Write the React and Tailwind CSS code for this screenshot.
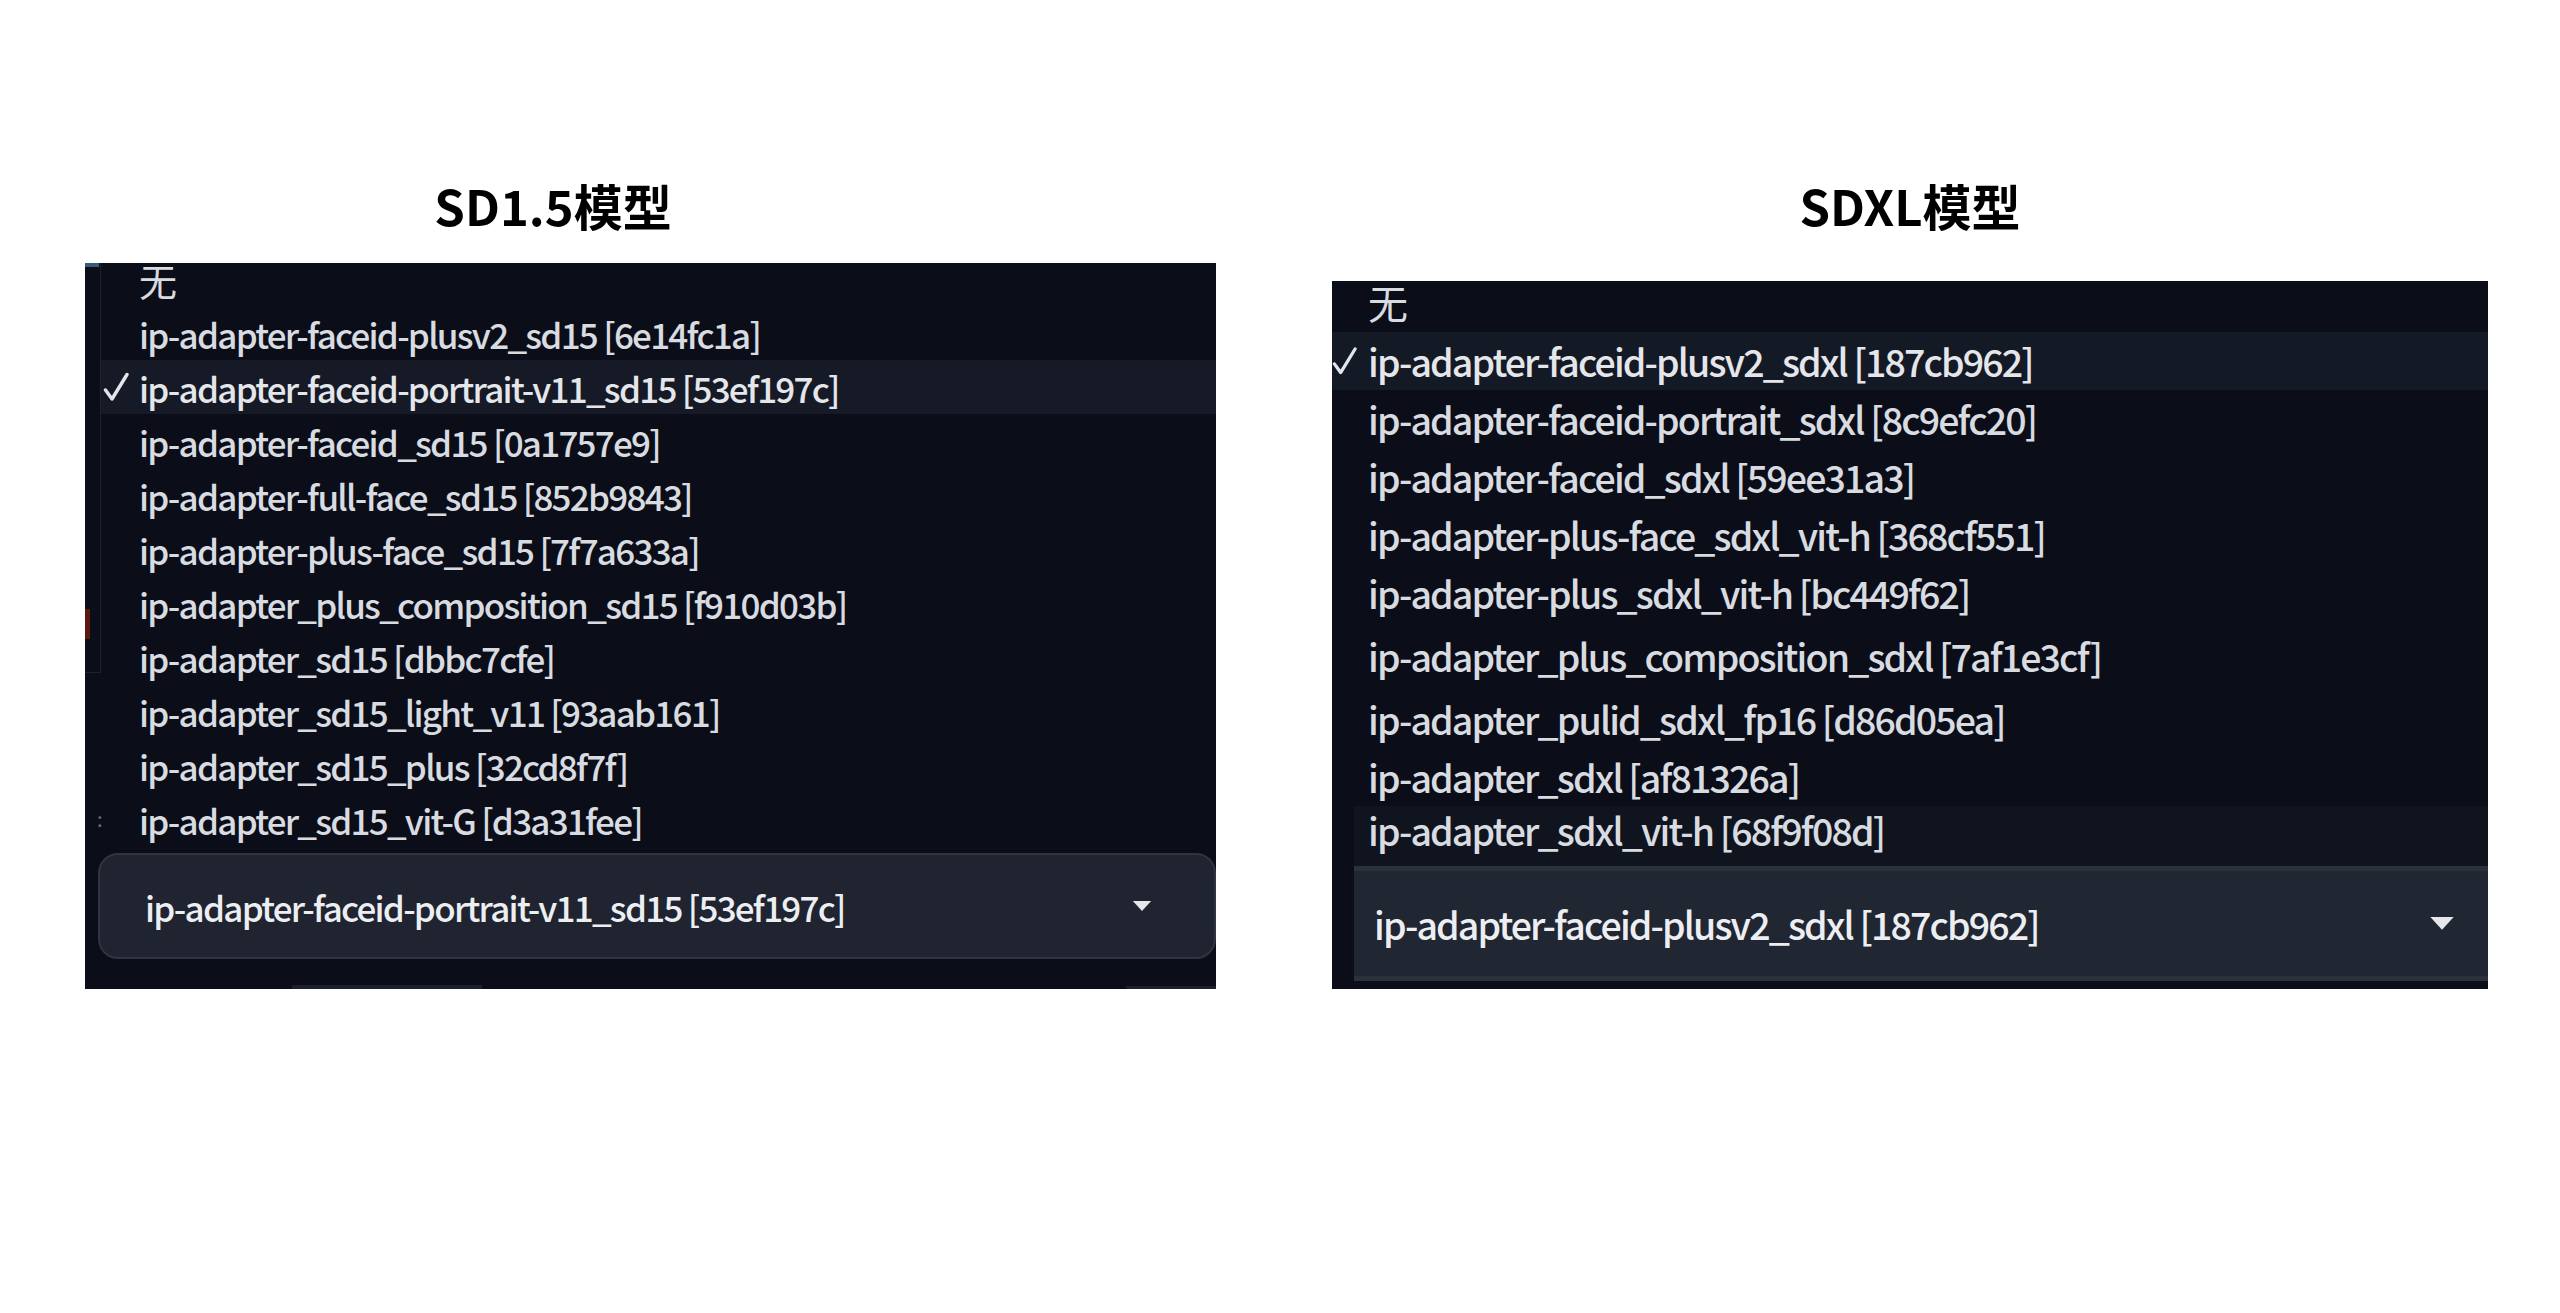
import React from "react";

const sd15Models = [
  "ip-adapter-faceid-plusv2_sd15 [6e14fc1a]",
  "ip-adapter-faceid-portrait-v11_sd15 [53ef197c]",
  "ip-adapter-faceid_sd15 [0a1757e9]",
  "ip-adapter-full-face_sd15 [852b9843]",
  "ip-adapter-plus-face_sd15 [7f7a633a]",
  "ip-adapter_plus_composition_sd15 [f910d03b]",
  "ip-adapter_sd15 [dbbc7cfe]",
  "ip-adapter_sd15_light_v11 [93aab161]",
  "ip-adapter_sd15_plus [32cd8f7f]",
  "ip-adapter_sd15_vit-G [d3a31fee]",
];

const sdxlModels = [
  "ip-adapter-faceid-plusv2_sdxl [187cb962]",
  "ip-adapter-faceid-portrait_sdxl [8c9efc20]",
  "ip-adapter-faceid_sdxl [59ee31a3]",
  "ip-adapter-plus-face_sdxl_vit-h [368cf551]",
  "ip-adapter-plus_sdxl_vit-h [bc449f62]",
  "ip-adapter_plus_composition_sdxl [7af1e3cf]",
  "ip-adapter_pulid_sdxl_fp16 [d86d05ea]",
  "ip-adapter_sdxl [af81326a]",
  "ip-adapter_sdxl_vit-h [68f9f08d]",
];

function Check({ className }) {
  return (
    <svg viewBox="0 0 26 30" className={className} fill="none">
      <path d="M2.5 18 L9 27 L24 2.5" stroke="#e2e5ea" strokeWidth="3.4" strokeLinecap="round" strokeLinejoin="round" />
    </svg>
  );
}

function Caret({ className }) {
  return (
    <svg viewBox="0 0 20 12" className={className}>
      <path d="M0 0 H20 L10 11 Z" fill="#e5e7eb" />
    </svg>
  );
}

function Sd15Panel() {
  return (
    <div className="relative w-[1131px] h-[726px] bg-[#0b0e18] flex flex-col">
      {/* edge of the panel underneath the open menu */}
      <div className="absolute left-0 top-0 w-[16px] h-[409px] border-r border-[#1c2130]" />
      <div className="absolute left-0 top-[409px] w-[16px] h-px bg-[#1c2130]" />
      <div className="absolute left-0 top-[346px] w-[5px] h-[30px] bg-[#5a1a10]" />
      <div className="absolute left-0 top-0 w-[14px] h-[4px] bg-[#3b5a7a]" />
      <span className="absolute left-[12px] top-[546px] text-[20px] leading-none text-[#6b7280]">:</span>

      <div className="h-[43px] pb-[10px] flex items-center pl-[54px] text-[38px] leading-none text-[#d8dbe0]">无</div>
      {sd15Models.map((m, i) => {
        const checked = i === 1;
        return (
          <div
            key={m}
            className={
              "h-[54px] ml-[16px] flex items-center text-[35px] font-medium tracking-[-0.05em] leading-none whitespace-nowrap " +
              (checked ? "bg-[#151a26] text-[#e4e6ea]" : "text-[#d8dbe0]")
            }
          >
            <span className="w-[38px] flex items-center">
              {checked && <Check className="w-[26px] h-[30px] ml-[2px]" />}
            </span>
            <span>{m}</span>
          </div>
        );
      })}
      <div className="mt-[7px] ml-[13px] h-[106px] rounded-[20px] border-2 bg-[#1f2430] border-[#2f3441] flex items-center justify-between pl-[45px] pr-[62px]">
        <span className="text-[35px] font-medium tracking-[-0.05em] leading-none text-[#eceef1] whitespace-nowrap">
          ip-adapter-faceid-portrait-v11_sd15 [53ef197c]
        </span>
        <Caret className="w-[20px] h-[11px]" />
      </div>
      <div className="flex-1 relative">
        <div className="absolute bottom-0 left-[207px] w-[190px] h-[4px] bg-[#1b202b]" />
        <div className="absolute bottom-0 right-0 w-[90px] h-[3px] bg-[#1b202b]" />
      </div>
    </div>
  );
}

function SdxlPanel() {
  return (
    <div className="w-[1156px] h-[708px] bg-[#0b0e18] flex flex-col">
      <div className="h-[51px] pb-[10px] flex items-center pl-[36px] text-[40px] leading-none text-[#d8dbe0]">无</div>
      {sdxlModels.map((m, i) => {
        const checked = i === 0;
        const last = i === sdxlModels.length - 1;
        const height = i === 5 ? "h-[68px]" : last ? "h-[60px] pb-[12px]" : "h-[58px]";
        return (
          <div
            key={m}
            className={
              height +
              " flex items-center text-[37.5px] font-medium tracking-[-0.05em] leading-none whitespace-nowrap " +
              (checked ? "bg-[#141926] text-[#e4e6ea] " : "text-[#d8dbe0] ") +
              (last ? "ml-[22px] bg-[#10141f]" : "")
            }
          >
            <span className={last ? "w-[14px]" : "w-[36px] flex items-center"}>
              {checked && <Check className="w-[25px] h-[30px]" />}
            </span>
            <span>{m}</span>
          </div>
        );
      })}
      <div className="ml-[22px] h-[115px] border-y-[5px] border-[#2b303b] bg-[#212633] flex items-center justify-between pl-[20px] pr-[34px]">
        <span className="text-[37.5px] font-medium tracking-[-0.05em] leading-none text-[#eceef1] whitespace-nowrap">
          ip-adapter-faceid-plusv2_sdxl [187cb962]
        </span>
        <Caret className="w-[24px] h-[14px]" />
      </div>
      <div className="flex-1" />
    </div>
  );
}

export default function App() {
  return (
    <div
      className="w-[2560px] h-[1313px] bg-white flex pl-[85px] pt-[172px]"
      style={{ fontFamily: '"Noto Sans CJK SC", "Noto Sans", sans-serif' }}
    >
      <div className="w-[1131px] flex flex-col">
        <h2 className="w-[936px] h-[64px] flex items-center justify-center text-[49px] font-bold text-black leading-none">
          SD1.5模型
        </h2>
        <div className="mt-[27px]">
          <Sd15Panel />
        </div>
      </div>
      <div className="ml-[116px] w-[1156px] flex flex-col">
        <h2 className="h-[64px] flex items-center justify-center text-[49px] font-bold text-black leading-none">
          SDXL模型
        </h2>
        <div className="mt-[45px]">
          <SdxlPanel />
        </div>
      </div>
    </div>
  );
}
